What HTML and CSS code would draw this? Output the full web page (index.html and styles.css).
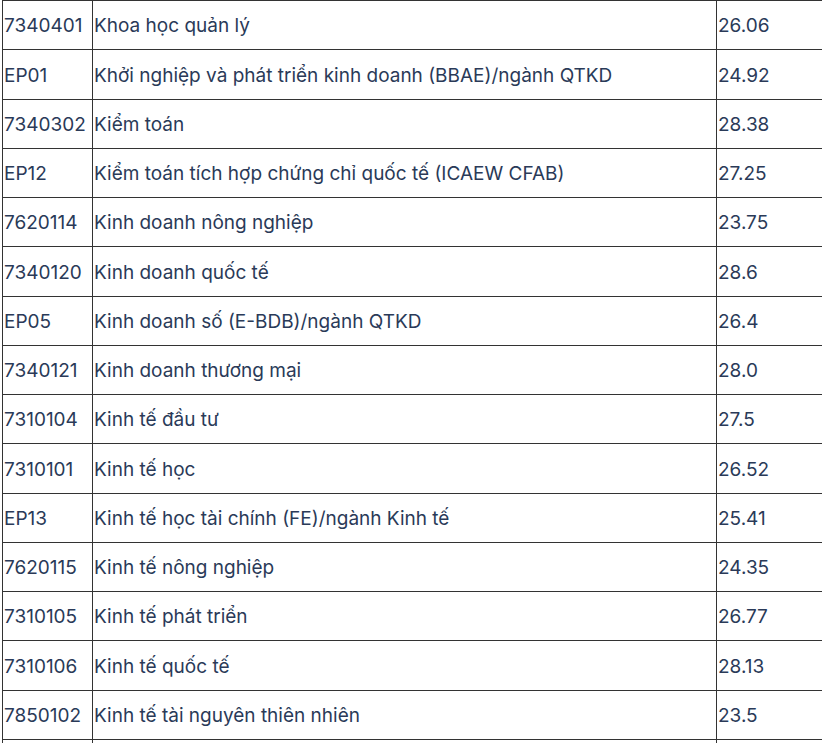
FILE: index.html
```html
<!DOCTYPE html>
<html lang="vi">
<head>
<meta charset="utf-8">
<link rel="stylesheet" href="styles.css">
</head>
<body>
<table class="scores">
<colgroup><col class="c-code"><col class="c-name"><col class="c-score"></colgroup>
<tbody>
<tr><td>7340401</td><td>Khoa học quản lý</td><td>26.06</td></tr>
<tr><td>EP01</td><td>Khởi nghiệp và phát triển kinh doanh (BBAE)/ngành QTKD</td><td>24.92</td></tr>
<tr><td>7340302</td><td>Kiểm toán</td><td>28.38</td></tr>
<tr><td>EP12</td><td>Kiểm toán tích hợp chứng chỉ quốc tế (ICAEW CFAB)</td><td>27.25</td></tr>
<tr><td>7620114</td><td>Kinh doanh nông nghiệp</td><td>23.75</td></tr>
<tr><td>7340120</td><td>Kinh doanh quốc tế</td><td>28.6</td></tr>
<tr><td>EP05</td><td>Kinh doanh số (E-BDB)/ngành QTKD</td><td>26.4</td></tr>
<tr><td>7340121</td><td>Kinh doanh thương mại</td><td>28.0</td></tr>
<tr><td>7310104</td><td>Kinh tế đầu tư</td><td>27.5</td></tr>
<tr><td>7310101</td><td>Kinh tế học</td><td>26.52</td></tr>
<tr><td>EP13</td><td>Kinh tế học tài chính (FE)/ngành Kinh tế</td><td>25.41</td></tr>
<tr><td>7620115</td><td>Kinh tế nông nghiệp</td><td>24.35</td></tr>
<tr><td>7310105</td><td>Kinh tế phát triển</td><td>26.77</td></tr>
<tr><td>7310106</td><td>Kinh tế quốc tế</td><td>28.13</td></tr>
<tr><td>7850102</td><td>Kinh tế tài nguyên thiên nhiên</td><td>23.5</td></tr>
<tr><td></td><td></td><td></td></tr>
</tbody>
</table>
</body>
</html>
```
FILE: styles.css
```css
html, body {
  margin: 0;
  padding: 0;
  background: #fff;
  overflow: hidden;
}
body {
  padding-left: 2px;
}
.scores {
  border-collapse: collapse;
  width: 840px;
  table-layout: fixed;
  font-family: Inter, "Noto Sans", sans-serif;
  font-size: 19px;
  color: #2a3a58;
}
.c-code { width: 90px; }
.c-name { width: 624px; }
.c-score { width: 126px; }
.scores td {
  border: 1px solid #333;
  height: 45.27px;
  padding: 3px 0 0 1px;
  vertical-align: middle;
  white-space: nowrap;
  line-height: 1.2;
}
```
